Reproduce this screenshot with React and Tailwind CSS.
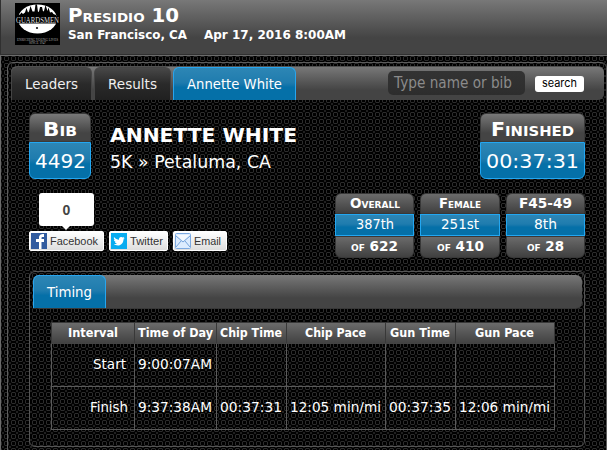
import React from "react";

const BAR = "bg-linear-to-b from-[#787878] via-[#5a5a5a] via-40% to-[#444] to-70%";
const GREY = "bg-linear-to-b from-[#6b6b6b] to-[#404040]";
const BLUE = "bg-linear-to-b from-[#2d86b5] via-[#1f7cae] via-45% to-[#0570a8] to-60%";

const COLUMNS = [
  { name: "Interval", width: "w-[83px]", text: 50 },
  { name: "Time of Day", width: "w-[82px]", text: 75 },
  { name: "Chip Time", width: "w-[70px]", text: 62 },
  { name: "Chip Pace", width: "w-[99px]", text: 61 },
  { name: "Gun Time", width: "w-[70px]", text: 60 },
  { name: "Gun Pace", width: "w-[99px]", text: 59 },
];

const ROWS = [
  ["Start", "9:00:07AM", "", "", "", ""],
  ["Finish", "9:37:38AM", "00:37:31", "12:05 min/mi", "00:37:35", "12:06 min/mi"],
];

const CELL_WIDTHS = [38, 74, 62, 91, 62, 91];

// Text scaled horizontally to a fixed run length
function Fit({ width, size, bold, caps, color = "#fff", children }) {
  return (
    <svg width={width} height={size + 6} className="block shrink-0 overflow-visible">
      <text
        x="0"
        y={size}
        textLength={width}
        lengthAdjust="spacingAndGlyphs"
        fill={color}
        fontSize={size}
        fontWeight={bold ? 700 : 400}
        style={{ fontVariant: caps ? "small-caps" : "normal" }}
      >
        {children}
      </text>
    </svg>
  );
}

function Texture() {
  return (
    <svg className="absolute inset-0 h-full w-full" shapeRendering="crispEdges">
      <defs>
        <pattern id="rings" x="3" y="6" width="7" height="7" patternUnits="userSpaceOnUse">
          <rect width="7" height="7" fill="#000" />
          <path d="M2 1h3v1H2zM2 5h3v1H2zM1 2h1v3H1zM5 2h1v3H5z" fill="#2c2c2c" />
          <path d="M0 0h1v1H0zM6 0h1v1H6zM0 6h1v1H0zM6 6h1v1H6z" fill="#202020" />
          <path d="M1 1h1v1H1zM5 1h1v1H5zM1 5h1v1H1zM5 5h1v1H5z" fill="#121212" />
        </pattern>
      </defs>
      <rect width="100%" height="100%" fill="url(#rings)" />
    </svg>
  );
}

function Logo() {
  return (
    <svg width="45" height="42" viewBox="0 0 45 42" className="ml-[14px] mt-[3px] shrink-0 overflow-visible">
      <rect width="45" height="42" fill="#000" />
      <ellipse cx="22.500" cy="16" rx="19.500" ry="14.500" fill="#fff" />
      <path
        d="M2 15V12.500L5 11.500 6.500 9.500 8 11 10 9.500 11.500 5 13 9.500 14 8.500 15.500 3 17.500 8.500 19.500 8.500 20.500 1.500 22 1.500 23 9 24 8.500 25 4 27 4 28 8.500 29 8 30.500 2 32.500 8 33.500 4.500 35 9.500 37 9 38.500 11 41 12 43 15z"
        fill="#000"
      />
      <path d="M0 14h45v6.500H0z" fill="#000" />
      <g fontFamily="Liberation Serif, serif">
        <text x="1" y="19.700" textLength="43" lengthAdjust="spacingAndGlyphs" fontSize="7.500" fill="#ddd">GUARDSMEN</text>
        <text x="2" y="37.500" textLength="41" lengthAdjust="spacingAndGlyphs" fontSize="3.600" fill="#aaa">ENRICHING YOUNG LIVES</text>
        <text x="14" y="40.600" textLength="17" lengthAdjust="spacingAndGlyphs" fontSize="3" fill="#aaa">SINCE 1947</text>
      </g>
      <circle cx="22" cy="25" r="1.1" fill="#111" />
    </svg>
  );
}

function Tab({ width, textWidth, active, children }) {
  return (
    <div
      style={{ width }}
      className={`flex h-full justify-center rounded-t-[6px] border border-b-0 pt-[6px] ${
        active ? `border-[#27a5ee] ${BLUE}` : "border-[#454545] bg-linear-to-b from-[#484848] via-[#2a2a2a] via-50% to-[#202020]"
      }`}
    >
      <Fit width={textWidth} size={14.5} color={active ? "#fff" : "#eee"}>{children}</Fit>
    </div>
  );
}

function Badge({ width, title, titleWidth, value, valueWidth }) {
  return (
    <div style={{ width }} className="flex h-[66px] flex-col">
      <div className={`flex h-[29px] justify-center rounded-t-[6px] border border-[#3a3a3a] pt-[2px] ${BAR}`}>
        <Fit width={titleWidth} size={19.5} bold caps>{title}</Fit>
      </div>
      <div className={`flex h-[37px] justify-center rounded-b-[6px] border border-[#22a7f2] pt-[5px] ${BLUE}`}>
        <Fit width={valueWidth} size={20}>{value}</Fit>
      </div>
    </div>
  );
}

function Rank({ width, title, titleWidth, value, valueWidth, total, totalWidth }) {
  return (
    <div style={{ width }} className="flex h-[65px] flex-col">
      <div className={`flex h-[21px] justify-center rounded-t-[6px] border border-[#383838] ${GREY}`}>
        <Fit width={titleWidth} size={13.5} bold caps>{title}</Fit>
      </div>
      <div className={`flex h-[22px] justify-center border border-[#22a7f2] ${BLUE}`}>
        <Fit width={valueWidth} size={14}>{value}</Fit>
      </div>
      <div className={`flex h-[22px] justify-center rounded-b-[6px] border border-[#383838] ${GREY}`}>
        <Fit width={totalWidth} size={13.5} bold caps>{total}</Fit>
      </div>
    </div>
  );
}

function Share({ width, label, labelWidth, children }) {
  return (
    <div style={{ width }} className="flex h-5 items-start rounded-[2px] border border-white bg-linear-to-b from-white to-[#dedede] pl-px pt-px">
      <svg width="16" height="16" viewBox="0 0 16 16" className="shrink-0">{children}</svg>
      <div className="ml-[3px] mt-px font-['Liberation_Sans',sans-serif]">
        <Fit width={labelWidth} size={11} color="#333">{label}</Fit>
      </div>
    </div>
  );
}

export default function App() {
  return (
    <div className="relative isolate flex h-[450px] w-[607px] flex-col overflow-hidden bg-black font-['DejaVu_Sans',Verdana,sans-serif] text-white">
      <div className="absolute inset-0 -z-10">
        <Texture />
      </div>

      <header className={`flex h-[55px] shrink-0 border-b border-l border-[#303030] ${BAR}`}>
        <Logo />
        <div className="ml-[8px] mt-[3px]">
          <Fit width={111} size={19} bold caps>Presidio 10</Fit>
          <div className="-mt-[2px] flex gap-[17px]">
            <Fit width={119} size={12.5} bold>San Francisco, CA</Fit>
            <Fit width={142} size={12.5} bold>Apr 17, 2016 8:00AM</Fit>
          </div>
        </div>
      </header>

      <div className="h-[395px] border-l border-t border-[#6b6b6b] pl-[6px] pt-[6px]">
        <main className="h-[420px] w-[600px] rounded-t-[6px] border border-[#5c5c5c] pl-[3px] pt-[3px]">
          <nav className={`flex h-[34px] w-[593px] gap-[2px] rounded-[6px] border-t border-[#505050] ${BAR}`}>
            <Tab width={81} textWidth={53}>Leaders</Tab>
            <Tab width={77} textWidth={49}>Results</Tab>
            <Tab width={123} textWidth={95} active>Annette White</Tab>
            <div className="ml-[90px] mt-[4px] h-6 w-[137px] rounded-[5px] bg-linear-to-b from-[#333] to-[#2d2d2d] pl-[6px] pt-[2px]">
              <Fit width={118} size={15} color="#8b8b8b">Type name or bib</Fit>
            </div>
            <button className="ml-[8px] mt-[9px] flex h-4 w-[49px] justify-center rounded-[3px] bg-white font-[Inter,sans-serif]">
              <Fit width={35} size={11} color="#000">search</Fit>
            </button>
          </nav>

          <div className="ml-[18px] w-[556px]">
            <section className="mt-[13px] flex">
              <Badge width={62} title="Bib" titleWidth={34} value="4492" valueWidth={51} />
              <div className="ml-[19px] mt-[9px]">
                <Fit width={187} size={20} bold>ANNETTE WHITE</Fit>
                <div className="mt-[2px]">
                  <Fit width={161} size={17.5}>5K » Petaluma, CA</Fit>
                </div>
              </div>
              <div className="ml-auto">
                <Badge width={105} title="Finished" titleWidth={83} value="00:37:31" valueWidth={93} />
              </div>
            </section>

            <section className="mt-[14px] flex justify-between">
              <div>
                <div className="ml-[10px] flex h-[33px] w-[55px] items-center justify-center rounded-[3px] bg-white font-['Liberation_Sans',sans-serif] text-sm font-bold text-[#444]">0</div>
                <svg width="8" height="5" className="ml-[33px] block"><path d="M0 0h8L4 4z" fill="#fff" /></svg>
                <div className="flex gap-[5px]">
                  <Share width={75} label="Facebook" labelWidth={48}>
                    <path d="M0 0h16v16H0z" fill="#315b9f" />
                    <path d="M8 16V9H5V6h3V5c0-2.500 1-4 5-4v3h-1.500C10.500 4 10.500 4.500 10.500 6H13v3h-2.500v7z" fill="#fff" />
                  </Share>
                  <Share width={59} label="Twitter" labelWidth={33}>
                    <path d="M0 0h16v16H0z" fill="#08acf0" />
                    <path d="M3 4c1.500 2 3.200 2.600 5 2.700C7.800 4.800 9 3.700 10.500 4c.5.1.9.3 1.200.6L13.300 4l-.8 1.500 1.200-.2-1.200 1.200C12.300 10 10 12.500 7 12.500c-1.700 0-3.200-.5-4.200-1.200 1.400.1 2.400-.2 3.200-.8-1.200-.2-1.800-.7-2.100-1.500h.9C3.500 8.500 3 7.700 3 6.700l.9.3C2.900 6 2.600 5.100 3 4z" fill="#fff" />
                  </Share>
                  <Share width={54} label="Email" labelWidth={27}>
                    <rect x=".5" y=".5" width="15" height="15" rx="1" fill="#dcecff" stroke="#7caae2" />
                    <path d="M1 3l7 6 7-6M1 14l5-6M15 14l-5-6" fill="none" stroke="#75a4dc" />
                    <path d="M1.500 2h13L8 8z" fill="#f5faff" />
                  </Share>
                </div>
              </div>
              <div className="flex gap-[6px]">
                <Rank width={79} title="Overall" titleWidth={50} value="387th" valueWidth={38} total="of 622" totalWidth={47} />
                <Rank width={80} title="Female" titleWidth={42} value="251st" valueWidth={38} total="of 410" totalWidth={47} />
                <Rank width={79} title="F45-49" titleWidth={53} value="8th" valueWidth={23} total="of 28" totalWidth={37} />
              </div>
            </section>

            <section className="mt-[13px] h-[176px] rounded-[6px] border border-[#555] px-[3px] pt-[3px]">
              <div className={`h-[34px] w-[549px] rounded-[6px] border-b border-[#383838] ${BAR}`}>
                <Tab width={73} textWidth={45} active>Timing</Tab>
              </div>
              <table className="ml-[18px] mt-[13px] w-[504px] table-fixed border-collapse">
                <thead>
                  <tr className={`h-[21px] ${GREY}`}>
                    {COLUMNS.map((col) => (
                      <th key={col.name} className={`border border-[#383838] border-b-[#444] p-0 ${col.width}`}>
                        <div className="flex h-5 justify-center pr-px pt-[2px]">
                          <Fit width={col.text} size={12} bold>{col.name}</Fit>
                        </div>
                      </th>
                    ))}
                  </tr>
                </thead>
                <tbody>
                  {ROWS.map((row) => (
                    <tr key={row[0]} className="h-[43px]">
                      {row.map((cell, i) => (
                        <td key={i} className="border border-[#5a5a5a] p-0">
                          <div className={`flex ${i > 0 ? "justify-center pr-[2px]" : cell === "Start" ? "justify-end pr-2" : "justify-end pr-[6px]"}`}>
                            {cell && (
                              <Fit width={cell === "Start" ? 33 : CELL_WIDTHS[i]} size={13.5}>{cell}</Fit>
                            )}
                          </div>
                        </td>
                      ))}
                    </tr>
                  ))}
                </tbody>
              </table>
            </section>
          </div>
        </main>
      </div>
    </div>
  );
}
